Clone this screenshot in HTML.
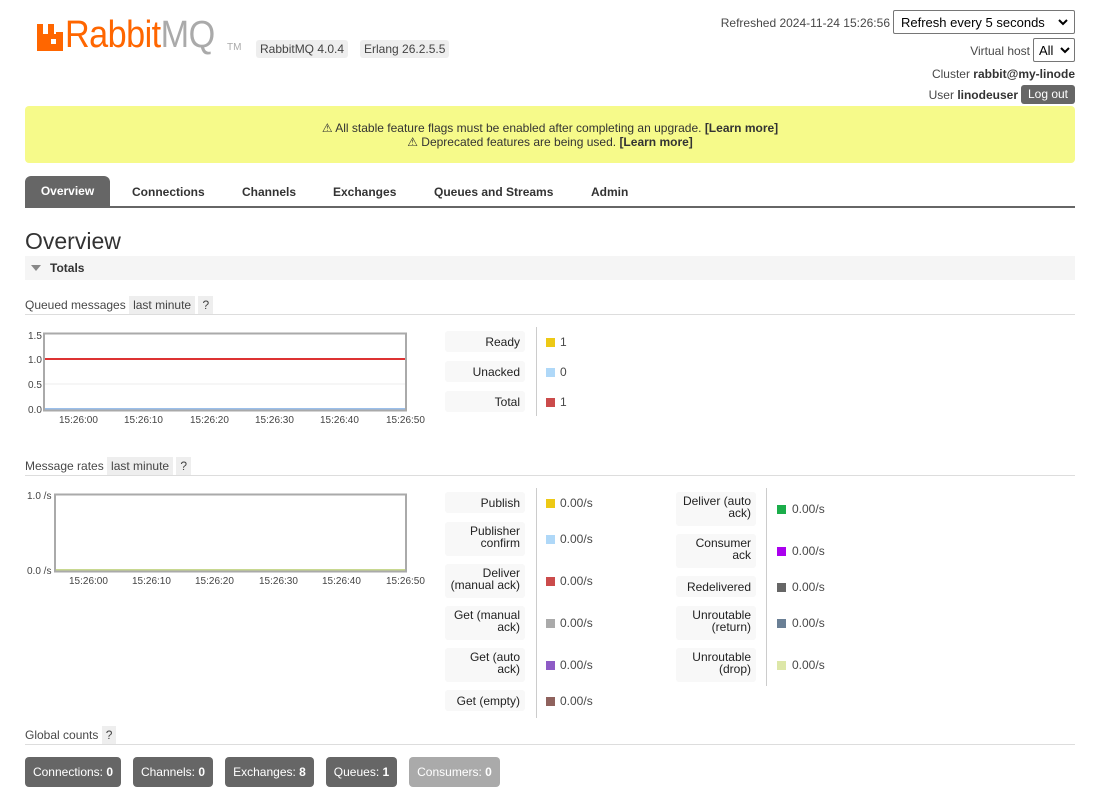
<!DOCTYPE html>
<html><head><meta charset="utf-8"><style>
*{box-sizing:border-box;margin:0;padding:0}
body{width:1094px;height:794px;overflow:hidden;background:#fff;font-family:"Liberation Sans",sans-serif;font-size:12px;color:#484848;position:relative}
.a{position:absolute;white-space:nowrap}
.tag{background:#eee;border-radius:3px;padding:2px 4px;color:#444}
.lbl{position:absolute;background:#f8f8f8;border-radius:3px;text-align:right;padding:3px 5px;width:80px;color:#222;line-height:12px}
.sw{position:absolute;width:9px;height:9px}
.val{position:absolute;color:#484848}
.btn{position:absolute;top:757px;height:30px;border-radius:4px;background:#666;color:#fff;font-size:12px;line-height:30px;text-align:center;white-space:nowrap}
.sel{position:absolute;border:1px solid #767676;border-radius:2px;background:#fff;color:#000;font-size:13px;white-space:nowrap}
.chev{position:absolute;right:6px;top:8px}
</style></head><body>
<!-- logo -->
<svg class="a" style="left:37px;top:24px" width="26" height="27" viewBox="0 0 26 27"><path d="M0 0h6v10h5V0h6v10h2v-2h7v19H0z" fill="#f60"/><rect x="14" y="15" width="5" height="5" fill="#fff"/></svg>
<div class="a" style="left:65px;top:14px;font-size:38px;color:#f60;letter-spacing:-0.6px;transform:scaleX(0.9);transform-origin:left">Rabbit<span style="color:#aaa">MQ</span></div>
<div class="a" style="left:227px;top:42px;font-size:10px;color:#aaa">TM</div>
<div class="a tag" style="left:256px;top:40px">RabbitMQ 4.0.4</div>
<div class="a tag" style="left:360px;top:40px">Erlang 26.2.5.5</div>
<!-- top right -->
<div class="a" style="right:204px;top:16px">Refreshed 2024-11-24 15:26:56</div>
<div class="sel" style="left:893px;top:10px;width:182px;height:24px;padding:4px 7px">Refresh every 5 seconds<svg class="chev" width="10" height="7" viewBox="0 0 10 7"><path d="M1 1l4 4 4-4" stroke="#000" stroke-width="2" fill="none"/></svg></div>
<div class="a" style="right:64px;top:44px">Virtual host</div>
<div class="sel" style="left:1033px;top:38px;width:42px;height:24px;padding:4px 5px">All<svg class="chev" width="10" height="7" viewBox="0 0 10 7" style="right:4px"><path d="M1 1l4 4 4-4" stroke="#000" stroke-width="2" fill="none"/></svg></div>
<div class="a" style="right:19px;top:67px">Cluster <b style="color:#333">rabbit@my-linode</b></div>
<div class="a" style="right:76px;top:88px">User <b style="color:#333">linodeuser</b></div>
<div class="a" style="left:1021px;top:85px;width:54px;height:19px;background:#666;color:#fff;border-radius:3px;text-align:center;line-height:19px">Log out</div>
<!-- warning -->
<div class="a" style="left:25px;top:106px;width:1050px;height:57px;background:#f6fa8a;border-radius:4px;text-align:center;color:#333;padding-top:15px;line-height:14px">⚠ All stable feature flags must be enabled after completing an upgrade. <b>[Learn more]</b><br>⚠ Deprecated features are being used. <b>[Learn more]</b></div>
<!-- tabs -->
<div class="a" style="left:25px;top:176px;width:85px;height:31px;background:#666;color:#fff;border-radius:6px 6px 0 0;font-weight:bold;text-align:center;line-height:31px">Overview</div>
<div class="a" style="left:132px;top:185px;font-weight:bold;color:#333">Connections</div>
<div class="a" style="left:242px;top:185px;font-weight:bold;color:#333">Channels</div>
<div class="a" style="left:333px;top:185px;font-weight:bold;color:#333">Exchanges</div>
<div class="a" style="left:434px;top:185px;font-weight:bold;color:#333">Queues and Streams</div>
<div class="a" style="left:591px;top:185px;font-weight:bold;color:#333">Admin</div>
<div class="a" style="left:25px;top:206px;width:1050px;height:2px;background:#666"></div>
<div class="a" style="left:25px;top:228px;font-size:23px;color:#333">Overview</div>
<div class="a" style="left:25px;top:256px;width:1050px;height:24px;background:#f5f5f5"></div>
<div class="a" style="left:31px;top:265px;width:0;height:0;border-left:5px solid transparent;border-right:5px solid transparent;border-top:6px solid #888"></div>
<div class="a" style="left:50px;top:261px;font-weight:bold;color:#333">Totals</div>
<!-- queued -->
<div class="a" style="left:25px;top:298px">Queued messages <span class="tag" style="border-radius:0">last minute</span> <span class="tag" style="border-radius:0">?</span></div>
<div class="a" style="left:25px;top:314px;width:1050px;height:1px;background:#ddd"></div>
<svg class="a" style="left:0;top:325px" width="440" height="105">
<g font-size="10" fill="#444" font-family="Liberation Sans"><text x="28" y="14">1.5</text><text x="28" y="38">1.0</text><text x="28" y="63">0.5</text><text x="28" y="88">0.0</text>
<text x="59" y="98">15:26:00</text><text x="124" y="98">15:26:10</text><text x="190" y="98">15:26:20</text><text x="255" y="98">15:26:30</text><text x="320" y="98">15:26:40</text><text x="386" y="98">15:26:50</text></g>
<line x1="45" y1="59" x2="405" y2="59" stroke="#eee"/>
<line x1="45" y1="34" x2="405" y2="34" stroke="#d33" stroke-width="2"/>
<line x1="45" y1="84" x2="405" y2="84" stroke="#9bbfea" stroke-width="2"/>
<rect x="44" y="8.5" width="362" height="77" fill="none" stroke="#aaa" stroke-width="2"/>
</svg>
<div class="lbl" style="left:445px;top:331px;height:21px;padding-top:5px">Ready</div>
<div class="lbl" style="left:445px;top:361px;height:21px;padding-top:5px">Unacked</div>
<div class="lbl" style="left:445px;top:391px;height:21px;padding-top:5px">Total</div>
<div class="a" style="left:536px;top:327px;width:1px;height:89px;background:#ccc"></div>
<div class="sw" style="left:546px;top:338px;background:#edc915"></div><div class="val" style="left:560px;top:335px">1</div>
<div class="sw" style="left:546px;top:368px;background:#afd8f8"></div><div class="val" style="left:560px;top:365px">0</div>
<div class="sw" style="left:546px;top:398px;background:#cb4b4b"></div><div class="val" style="left:560px;top:395px">1</div>
<!-- rates -->
<div class="a" style="left:25px;top:459px">Message rates <span class="tag" style="border-radius:0">last minute</span> <span class="tag" style="border-radius:0">?</span></div>
<div class="a" style="left:25px;top:475px;width:1050px;height:1px;background:#ddd"></div>
<svg class="a" style="left:0;top:486px" width="440" height="105">
<g font-size="10" fill="#444" font-family="Liberation Sans"><text x="27" y="13">1.0 /s</text><text x="27" y="88">0.0 /s</text>
<text x="69" y="98">15:26:00</text><text x="132" y="98">15:26:10</text><text x="195" y="98">15:26:20</text><text x="259" y="98">15:26:30</text><text x="322" y="98">15:26:40</text><text x="386" y="98">15:26:50</text></g>
<line x1="56" y1="84" x2="405" y2="84" stroke="#c8d890" stroke-width="2"/>
<rect x="55" y="8.5" width="351" height="77" fill="none" stroke="#aaa" stroke-width="2"/>
</svg>
<div class="lbl" style="left:445px;top:492px;height:21px;padding-top:5px">Publish</div>
<div class="lbl" style="left:445px;top:522px;height:34px">Publisher<br>confirm</div>
<div class="lbl" style="left:445px;top:564px;height:34px">Deliver<br>(manual ack)</div>
<div class="lbl" style="left:445px;top:606px;height:34px">Get (manual<br>ack)</div>
<div class="lbl" style="left:445px;top:648px;height:34px">Get (auto<br>ack)</div>
<div class="lbl" style="left:445px;top:690px;height:21px;padding-top:5px">Get (empty)</div>
<div class="a" style="left:536px;top:488px;width:1px;height:230px;background:#ccc"></div>
<div class="sw" style="left:546px;top:499px;background:#edc915"></div><div class="val" style="left:560px;top:496px">0.00/s</div>
<div class="sw" style="left:546px;top:535px;background:#afd8f8"></div><div class="val" style="left:560px;top:532px">0.00/s</div>
<div class="sw" style="left:546px;top:577px;background:#cb4b4b"></div><div class="val" style="left:560px;top:574px">0.00/s</div>
<div class="sw" style="left:546px;top:619px;background:#aaa"></div><div class="val" style="left:560px;top:616px">0.00/s</div>
<div class="sw" style="left:546px;top:661px;background:#8e5bc6"></div><div class="val" style="left:560px;top:658px">0.00/s</div>
<div class="sw" style="left:546px;top:697px;background:#8f625d"></div><div class="val" style="left:560px;top:694px">0.00/s</div>
<div class="lbl" style="left:676px;top:492px;height:34px">Deliver (auto<br>ack)</div>
<div class="lbl" style="left:676px;top:534px;height:34px">Consumer<br>ack</div>
<div class="lbl" style="left:676px;top:576px;height:21px;padding-top:5px">Redelivered</div>
<div class="lbl" style="left:676px;top:606px;height:34px">Unroutable<br>(return)</div>
<div class="lbl" style="left:676px;top:648px;height:34px">Unroutable<br>(drop)</div>
<div class="a" style="left:766px;top:488px;width:1px;height:198px;background:#ccc"></div>
<div class="sw" style="left:777px;top:505px;background:#1bad4a"></div><div class="val" style="left:792px;top:502px">0.00/s</div>
<div class="sw" style="left:777px;top:547px;background:#a0e"></div><div class="val" style="left:792px;top:544px">0.00/s</div>
<div class="sw" style="left:777px;top:583px;background:#666"></div><div class="val" style="left:792px;top:580px">0.00/s</div>
<div class="sw" style="left:777px;top:619px;background:#6a7f95"></div><div class="val" style="left:792px;top:616px">0.00/s</div>
<div class="sw" style="left:777px;top:661px;background:#dde7a8"></div><div class="val" style="left:792px;top:658px">0.00/s</div>
<!-- global -->
<div class="a" style="left:25px;top:728px">Global counts <span class="tag" style="border-radius:0">?</span></div>
<div class="a" style="left:25px;top:744px;width:1050px;height:1px;background:#ddd"></div>
<div class="btn" style="left:25px;width:96px">Connections: <b>0</b></div>
<div class="btn" style="left:133px;width:80px">Channels: <b>0</b></div>
<div class="btn" style="left:225px;width:89px">Exchanges: <b>8</b></div>
<div class="btn" style="left:326px;width:71px">Queues: <b>1</b></div>
<div class="btn" style="left:409px;width:91px;background:#aaa">Consumers: <b>0</b></div>
</body></html>
